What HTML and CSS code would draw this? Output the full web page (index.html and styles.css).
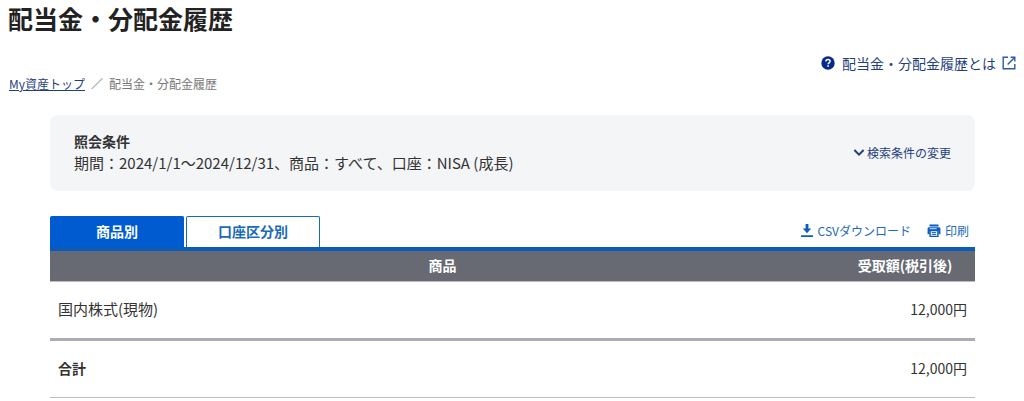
FILE: index.html
```
<!DOCTYPE html>
<html lang="ja">
<head>
  <meta charset="UTF-8" />
  <meta name="viewport" content="width=device-width, initial-scale=1.0"/>
  <title>配当金・分配金履歴</title>
  <link rel="stylesheet" href="styles.css">
</head>
<body>
  <header class="page-header">
    <h1>配当金・分配金履歴</h1>
    <a class="help-link" href="#">
      <svg class="help-icon" width="14" height="14" viewBox="0 0 14 14" aria-hidden="true">
        <circle cx="7" cy="7" r="6.7" fill="#062a8c"/>
        <path d="M4.9 5.5C4.9 4.2 5.8 3.5 7 3.5s2.1.7 2.1 1.8c0 1.5-2 1.5-2 3" fill="none" stroke="#fff" stroke-width="1.5"/>
        <rect x="6.3" y="9.2" width="1.6" height="1.6" fill="#fff"/>
      </svg>
      <span>配当金・分配金履歴とは</span>
      <svg width="14" height="14" viewBox="0 0 14 14" fill="none" stroke="#2a5d9c" stroke-width="1.4" aria-hidden="true">
        <path d="M6 1.2H1.2v11.6h11.6V8"/>
        <path d="M8.6 1.2h4.2v4.2M12.6 1.4L5.6 8.4"/>
      </svg>
    </a>
  </header>

  <nav class="breadcrumb">
    <a href="#">My資産トップ</a>
    <span>／</span>
    <span>配当金・分配金履歴</span>
  </nav>

  <main class="content">
    <section class="condition-box">
      <div>
        <h2>照会条件</h2>
        <p>期間：2024/1/1～2024/12/31、商品：すべて、口座：NISA (成長)</p>
      </div>
      <button class="change-btn" type="button">
        <svg width="12" height="9" viewBox="0 0 12 9" fill="none" stroke="#1f3f7d" stroke-width="2" aria-hidden="true">
          <path d="M1.4 2L6 6.6 10.6 2"/>
        </svg>
        検索条件の変更
      </button>
    </section>

    <div class="tab-bar">
      <div class="tabs" role="tablist">
        <button class="tab active" type="button" role="tab" aria-selected="true">商品別</button>
        <button class="tab" type="button" role="tab" aria-selected="false">口座区分別</button>
      </div>
      <div class="tools">
        <a href="#">
          <svg width="14" height="14" viewBox="0 0 14 14" fill="#0b5cc0" aria-hidden="true">
            <path d="M5.6 0h2.8v4.6h2.8L7 9.2 2.8 4.6h2.8zM1 11.2h12V13H1z"/>
          </svg>
          CSVダウンロード
        </a>
        <a href="#">
          <svg width="14" height="14" viewBox="0 0 14 14" aria-hidden="true">
            <path d="M2.5.6h9v2h-9zM2 3.2h10c.8 0 1.4.6 1.4 1.4v5.6h-2V7H2.6v3.2h-2V4.600c0-.8.6-1.4 1.400-1.400z" fill="#0b5cc0"/>
            <path d="M3.100 6.600h7.800v5.800H3.100z" fill="#fff" stroke="#0b5cc0" stroke-width="1.400"/>
            <path d="M4.800 8.600h4.400M4.800 10.400h4.400" stroke="#0b5cc0"/>
            <path d="M2.600 4.700h7" stroke="#fff" stroke-width=".8"/>
          </svg>
          印刷
        </a>
      </div>
    </div>

    <table class="history">
      <thead>
        <tr>
          <th scope="col">商品</th>
          <th scope="col" class="amount">受取額(税引後)</th>
        </tr>
      </thead>
      <tbody>
        <tr>
          <td class="product">国内株式(現物)</td>
          <td class="amount">12,000円</td>
        </tr>
      </tbody>
      <tfoot>
        <tr>
          <th scope="row">合計</th>
          <td class="amount">12,000円</td>
        </tr>
      </tfoot>
    </table>
  </main>
</body>
</html>
```
FILE: styles.css
```
body {
  margin: 0;
  padding: 2px 8px 0;
  background: #fff;
  font-family: "Noto Sans CJK JP", sans-serif;
  font-size: 14px;
  line-height: 22px;
  color: #333;
}

h1, h2, p {
  margin: 0;
}

button {
  font-family: inherit;
  cursor: pointer;
}

svg {
  flex: none;
}

.page-header h1 {
  font-size: 25px;
  line-height: 32px;
  font-weight: 700;
  color: #222;
}

.help-link {
  display: flex;
  align-items: center;
  justify-content: flex-end;
  gap: 6px;
  margin-top: 18px;
  color: #1f3f7d;
  text-decoration: none;
}

.help-icon {
  margin-right: 1px;
}

.breadcrumb {
  display: flex;
  gap: 6px;
  padding-left: 1px;
  font-size: 12px;
  line-height: 20px;
  color: #777;
}

.breadcrumb a {
  color: #1f3f7d;
}

.content {
  margin: 21px 41px 0 42px;
}

.condition-box {
  display: flex;
  align-items: center;
  justify-content: space-between;
  padding: 15px 24px 17px;
  background: #f4f5f7;
  border-radius: 8px;
}

.condition-box h2 {
  font-size: 14px;
  font-weight: 700;
}

.condition-box p {
  font-size: 15px;
}

.change-btn {
  display: flex;
  align-items: center;
  gap: 2px;
  padding: 0;
  border: none;
  background: none;
  font-size: 12px;
  color: #1f3f7d;
}

.tab-bar {
  display: flex;
  align-items: flex-end;
  justify-content: space-between;
  margin-top: 25px;
  border-bottom: 4px solid #0b5cb8;
}

.tabs {
  display: flex;
  gap: 2px;
}

.tab {
  width: 134px;
  height: 31px;
  padding: 0 0 2px;
  border: 1px solid #1a6ab8;
  border-bottom: none;
  border-radius: 2px 2px 0 0;
  background: #fff;
  font-size: 14px;
  font-weight: 700;
  color: #1a6ab8;
}

.tab.active {
  border-color: #005bd0;
  background: #005bd0;
  color: #fff;
}

.tools {
  display: flex;
  gap: 16px;
  padding: 0 6px 5px 0;
}

.tools a {
  display: flex;
  align-items: center;
  gap: 4px;
  font-size: 12px;
  color: #1a6ab8;
  text-decoration: none;
}

.history {
  width: 100%;
  border-collapse: collapse;
}

.history th,
.history td {
  padding: 16px 8px 18px;
  border-bottom: 1px solid #bbbcc2;
  text-align: left;
}

.history thead th {
  padding: 3px 8px 5px;
  background: #676a73;
  color: #fff;
  text-align: center;
}

.history tbody td {
  border-bottom: 3px solid #abacb9;
}

.history .product {
  font-size: 15px;
}

.history .amount {
  width: 124px;
}

.history td.amount {
  text-align: right;
}
```
